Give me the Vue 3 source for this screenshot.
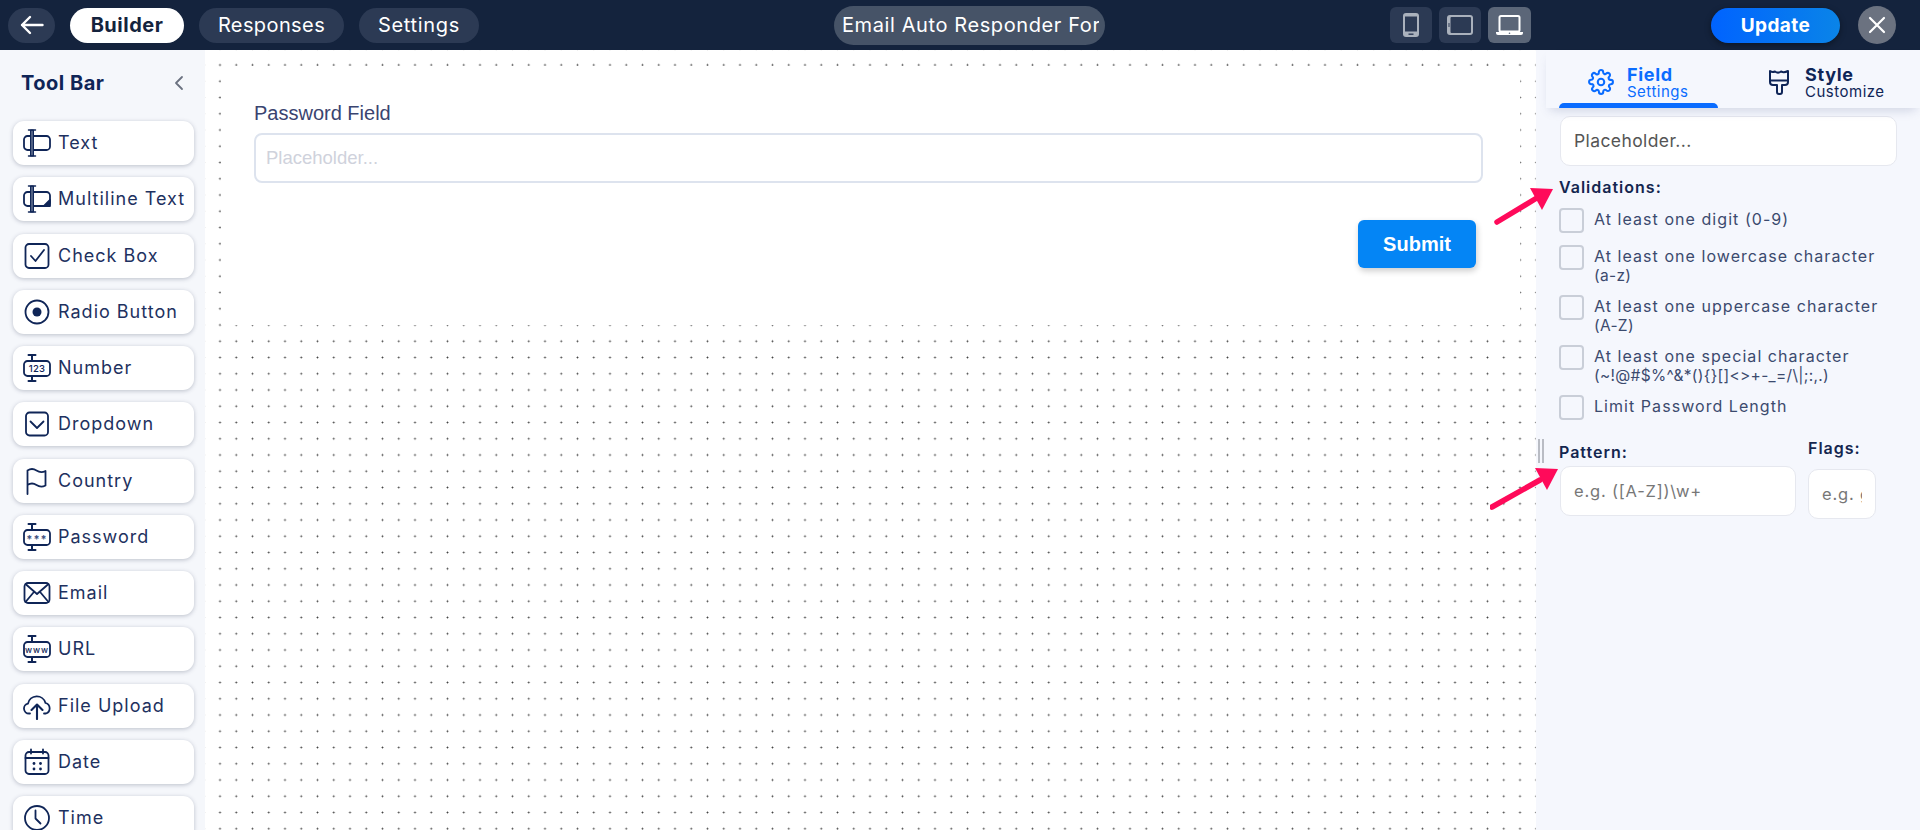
<template>
  <div class="page">
    <header class="top-bar">
      <button class="pill back-btn" aria-label="Back">
        <svg width="24" height="20" viewBox="0 0 24 20" fill="none" stroke="#fff" stroke-width="2.4" stroke-linecap="round" stroke-linejoin="round"><path d="M22.5 10H2M10 2 2 10l8 8"/></svg>
      </button>
      <button class="pill tab-btn active">Builder</button>
      <button class="pill tab-btn">Responses</button>
      <button class="pill tab-btn settings-btn">Settings</button>
      <div class="form-title"><span>Email Auto Responder Form</span></div>
      <div class="devices">
        <button class="device">
          <svg width="16" height="24" viewBox="0 0 16 24" fill="none"><rect x="0" y="0" width="16" height="24" rx="3" fill="#aab1bc"/><rect x="2" y="3.500" width="12" height="15" fill="#2c3a54"/><rect x="5.500" y="20.500" width="5" height="1.400" fill="#2c3a54"/></svg>
        </button>
        <button class="device">
          <svg width="26" height="20" viewBox="0 0 26 20" fill="none"><rect x="0" y="0" width="26" height="20" rx="3" fill="#aab1bc"/><rect x="3.500" y="2" width="20.500" height="16" rx="1" fill="#2c3a54"/><rect x="1.500" y="8" width="1" height="4" fill="#2c3a54"/></svg>
        </button>
        <button class="device on">
          <svg width="27" height="20" viewBox="0 0 27 20" fill="none"><rect x="3.500" y="1" width="20" height="15.500" rx="1.500" stroke="#fff" stroke-width="2"/><path d="M0 17h27v1a2 2 0 0 1-2 2H2a2 2 0 0 1-2-2z" fill="#fff"/><circle cx="13.500" cy="18.300" r="0.800" fill="#5b6678"/></svg>
        </button>
      </div>
      <button class="update-btn">Update</button>
      <button class="close-btn" aria-label="Close">
        <svg width="18" height="18" viewBox="0 0 18 18" stroke="#fff" stroke-width="2.200" stroke-linecap="round"><path d="M2 2l14 14M16 2 2 16"/></svg>
      </button>
    </header>

    <div class="workspace">
      <aside class="tool-bar">
        <div class="tool-head">
          <span>Tool Bar</span>
          <svg width="12" height="16" viewBox="0 0 12 16" fill="none" stroke="#6b7280" stroke-width="1.800" stroke-linecap="round" stroke-linejoin="round"><path d="M9 2 3 8l6 6"/></svg>
        </div>
        <ul class="tools">
          <li v-for="tool in tools" :key="tool.name" class="tool">
            <svg class="tool-icon" width="28" height="28" viewBox="0 0 28 28" fill="none" stroke="#0f2557" stroke-width="1.800" stroke-linecap="round" stroke-linejoin="round" v-html="tool.icon"></svg>
            <span class="tool-name">{{ tool.name }}</span>
          </li>
        </ul>
      </aside>

      <main class="canvas">
        <section class="form-card">
          <label class="form-label">Password Field</label>
          <div class="form-input">Placeholder...</div>
          <div class="submit-row"><button class="submit">Submit</button></div>
        </section>
      </main>

      <aside class="settings">
        <div class="panel-tabs">
          <div class="panel-tab active">
            <svg width="26" height="26" viewBox="0 0 24 24" fill="none" stroke="#0a6cff" stroke-width="1.900" stroke-linecap="round" stroke-linejoin="round"><circle cx="12" cy="12" r="3"/><path d="M19.4 15a1.65 1.65 0 0 0 .33 1.82l.06.06a2 2 0 1 1-2.83 2.83l-.06-.06a1.65 1.65 0 0 0-2.82 1.17V21a2 2 0 1 1-4 0v-.09a1.65 1.65 0 0 0-2.82-1.12l-.06.06a2 2 0 1 1-2.83-2.83l.06-.06A1.65 1.65 0 0 0 3.09 14H3a2 2 0 1 1 0-4h.09a1.65 1.65 0 0 0 1.12-2.82l-.06-.06a2 2 0 1 1 2.83-2.83l.06.06A1.65 1.65 0 0 0 10 3.09V3a2 2 0 1 1 4 0v.09a1.65 1.65 0 0 0 2.82 1.12l.06-.06a2 2 0 1 1 2.83 2.83l-.06.06A1.65 1.65 0 0 0 20.91 10H21a2 2 0 1 1 0 4h-.09a1.65 1.65 0 0 0-1.51 1z"/></svg>
            <div class="tab-text"><b>Field</b><small>Settings</small></div>
          </div>
          <div class="panel-tab">
            <svg width="22" height="28" viewBox="0 0 22 28" fill="none" stroke="#0f2557" stroke-width="2" stroke-linecap="round" stroke-linejoin="round"><path d="M2 2c2 1.500 3 1.500 5 .5 2 1.500 4 1.500 6 0 2 1 4 1 7-.5v11c0 2-1 3-3 3h-3v7a2 2 0 0 1-2 2h-1a2 2 0 0 1-2-2v-7H5c-2 0-3-1-3-3zM2 11.500h18"/></svg>
            <div class="tab-text"><b>Style</b><small>Customize</small></div>
          </div>
        </div>

        <div class="panel-body">
          <div class="text-input">Placeholder...</div>
          <h4 class="validations-title">Validations:</h4>
          <div v-for="rule in rules" :key="rule.text" class="rule">
            <span class="check"></span>
            <span class="rule-text">{{ rule.text }}<span v-if="rule.sub" class="rule-sub">{{ rule.sub }}</span></span>
          </div>
          <div class="regex-row">
            <div class="pattern">
              <h4>Pattern:</h4>
              <div class="text-input small">e.g. ([A-Z])\w+</div>
            </div>
            <div class="flags">
              <h4>Flags:</h4>
              <div class="text-input small flags-input"><span>e.g. gi</span></div>
            </div>
          </div>
        </div>
        <div class="grip"></div>
      </aside>
    </div>

    <svg class="arrows" width="90" height="340" viewBox="0 0 90 340" fill="none">
      <path d="M7 44 50 18" stroke="#ff0a5a" stroke-width="5.500" stroke-linecap="round"/>
      <path d="M63 11 40 10 52 32z" fill="#ff0a5a"/>
      <path d="M2 329 50 302" stroke="#ff0a5a" stroke-width="5.500" stroke-linecap="round"/>
      <path d="M68 291 45 290 57 312z" fill="#ff0a5a"/>
    </svg>
  </div>
</template>

<script setup>
const beam = '<path d="M5.500 1h7M5.500 27h7M7.800 1.500v25M10.200 1.500v25" stroke-width="1.500"/>'
const field = (inner) =>
  `<rect x="1" y="7" width="26" height="15" rx="3.500"/>${inner}<path d="M5.500 1h7M5.500 27h7M9 1.500V7M9 22v5" stroke-width="2"/>`

const tools = [
  { name: 'Text', icon: `<rect x="1" y="7" width="26" height="14" rx="3.500"/><rect x="7.800" y="1" width="2.400" height="26" fill="#fff" stroke-width="1.200"/>${beam}` },
  { name: 'Multiline Text', icon: `<rect x="1" y="7" width="26" height="14" rx="3.500"/><path d="M27 15v6h-6z" fill="#0f2557"/><rect x="7.800" y="1" width="2.400" height="26" fill="#fff" stroke-width="1.200"/>${beam}` },
  { name: 'Check Box', icon: '<rect x="2.500" y="2" width="23" height="24" rx="3.500"/><path d="M8 14l4.500 5L21 8"/>' },
  { name: 'Radio Button', icon: '<circle cx="14" cy="14" r="11.500"/><circle cx="14" cy="14" r="4.500" fill="#0f2557" stroke="none"/>' },
  { name: 'Number', icon: field('<text x="14" y="18" text-anchor="middle" font-family="Inter, sans-serif" font-size="9.500" font-weight="500" letter-spacing="0.300" fill="#0f2557" stroke="none">123</text>') },
  { name: 'Dropdown', icon: '<rect x="3" y="2.500" width="22" height="23" rx="3.500"/><path d="M7.500 11.500 14 18l6.500-6.500"/>' },
  { name: 'Country', icon: '<path d="M4.500 27V3.500c3-2 6-2 9 0s6 2 9 .5v14.500c-3 1.500-6 1.500-9 -.5s-6-2-9 0"/>' },
  { name: 'Password', icon: field('<text x="14" y="20" text-anchor="middle" font-family="Inter, sans-serif" font-size="11" font-weight="700" fill="#3d5080" stroke="none">***</text>') },
  { name: 'Email', icon: '<rect x="1.500" y="4" width="25" height="20" rx="3.500"/><path d="M2.500 5 14 15 25.500 5M2.500 23l8-9.500M25.500 23l-8-9.500"/>' },
  { name: 'URL', icon: field('<text x="14" y="17.500" text-anchor="middle" font-family="Inter, sans-serif" font-size="8.500" font-weight="500" fill="#0f2557" stroke="none">www</text>') },
  { name: 'File Upload', icon: '<path d="M7 21.500H6A5 5 0 0 1 5 11.600 9 9 0 0 1 22.500 11a5.500 5.500 0 0 1 .5 10.500h-2"/><path d="M14 27V13M8.500 18 14 12.500l5.500 5.500" stroke-width="2.100"/>' },
  { name: 'Date', icon: '<rect x="2.500" y="4" width="23" height="22" rx="3.500"/><path d="M2.500 10h23M8 1.500v4M20 1.500v4"/><g fill="#0f2557" stroke="none"><circle cx="11" cy="15.500" r="1.400"/><circle cx="17.500" cy="15.500" r="1.400"/><circle cx="11" cy="21" r="1.400"/><circle cx="17.500" cy="21" r="1.400"/></g>' },
  { name: 'Time', icon: '<circle cx="14" cy="14" r="12"/><path d="M12.500 6.500v8l5 5"/>' }
]

const rules = [
  { text: 'At least one digit (0-9)' },
  { text: 'At least one lowercase character', sub: '(a-z)' },
  { text: 'At least one uppercase character', sub: '(A-Z)' },
  { text: 'At least one special character', sub: '(~!@#$%^&*(){}[]<>+-_=/\\|;:,.)' },
  { text: 'Limit Password Length' }
]
</script>

<style>
html, body { margin: 0; height: 830px; overflow: hidden; background: #fff; }
</style>

<style scoped>
.page {
  position: relative;
  width: 1920px;
  height: 830px;
  overflow: hidden;
  font-family: Inter, "Noto Sans", sans-serif;
  color: #0f2557;
}
button { font-family: inherit; border: none; cursor: pointer; padding: 0; }

.top-bar {
  height: 50px;
  background: #14233d;
  display: flex;
  align-items: center;
  padding-left: 8px;
  box-sizing: border-box;
}
.pill {
  height: 35px;
  border-radius: 18px;
  background: #2c3a54;
  color: #fff;
  font-size: 20px;
  display: flex;
  align-items: center;
  justify-content: center;
}
.back-btn { width: 47px; margin-right: 15px; }
.tab-btn { width: 145px; margin-right: 15px; font-size: 20px; letter-spacing: 0.4px; }
.tab-btn.active { width: 114px; background: #fff; color: #14233d; font-weight: 700; letter-spacing: 0.5px; }
.settings-btn { width: 120px; letter-spacing: 0.7px; }
.form-title {
  margin-left: 340px;
  width: 271px;
  height: 39px;
  border-radius: 20px;
  background: #465367;
  color: #fff;
  font-size: 20px;
  line-height: 39px;
  padding-left: 8px;
  box-sizing: border-box;
  overflow: hidden;
  white-space: nowrap;
}
.form-title span { display: block; width: 257px; overflow: hidden; letter-spacing: 0.6px; }
.devices { margin-left: 285px; display: flex; gap: 7px; }
.device {
  width: 42px;
  height: 36px;
  border-radius: 6px;
  background: #2c3a54;
  display: flex;
  align-items: center;
  justify-content: center;
}
.device.on { background: #5b6678; width: 43px; }
.update-btn {
  margin-left: 180px;
  width: 129px;
  height: 35px;
  border-radius: 18px;
  background: linear-gradient(90deg, #0063ff, #0a84e8);
  color: #fff;
  font-size: 19px;
  font-weight: 700;
  letter-spacing: 0.4px;
  box-shadow: 0 2px 6px rgba(0, 0, 0, 0.4);
}
.close-btn {
  margin-left: 18px;
  width: 38px;
  height: 38px;
  border-radius: 50%;
  background: #6b7280;
  display: flex;
  align-items: center;
  justify-content: center;
}

.workspace {
  display: grid;
  grid-template-columns: 205px 1331px 384px;
  height: 780px;
}

.tool-bar { background: #f5f7fb; overflow: hidden; }
.tool-head {
  display: flex;
  align-items: center;
  justify-content: space-between;
  padding: 23px 20px 0 21px;
  height: 20px;
  font-size: 20px;
  font-weight: 700;
  letter-spacing: 0.5px;
  color: #0f2557;
}
.tools {
  list-style: none;
  margin: 28px 0 0;
  padding: 0 11px 0 13px;
  display: flex;
  flex-direction: column;
  gap: 12.25px;
}
.tool {
  height: 44px;
  flex: none;
  display: flex;
  align-items: center;
  gap: 7px;
  padding-left: 10px;
  background: #fff;
  border-radius: 11px;
  box-shadow: 0 1px 4px rgba(40, 50, 80, 0.28);
  font-size: 18px;
  letter-spacing: 1px;
  color: #1e3160;
  white-space: nowrap;
}
.tool-icon { flex: none; }
.tool-name { margin-top: -1px; }

.canvas {
  background-color: #fff;
  background-image: radial-gradient(circle, #444 0.9px, transparent 1px);
  background-size: 16.25px 16.25px;
  background-position: 6.875px 6.875px;
  padding: 16px 0 0 16px;
  box-sizing: border-box;
}
.form-card {
  width: 1299px;
  height: 259px;
  background: #fff;
  padding: 37px 0 0 33px;
  box-sizing: border-box;
}
.form-label {
  display: block;
  font: 20px/21px "Liberation Sans", Arial, sans-serif;
  color: #3a4470;
}
.form-input {
  margin-top: 9px;
  width: 1229px;
  height: 50px;
  box-sizing: border-box;
  border: 2px solid #dde3ee;
  border-radius: 8px;
  padding-left: 10px;
  font: 18.5px/46px "Liberation Sans", Arial, sans-serif;
  color: #cfd2dc;
}
.submit-row { width: 1222px; display: flex; justify-content: flex-end; margin-top: 37px; }
.submit {
  width: 118px;
  height: 48px;
  border-radius: 6px;
  background: #0485f5;
  color: #fff;
  font: 700 20px "Liberation Sans", Arial, sans-serif;
  box-shadow: 1px 3px 6px rgba(0, 0, 0, 0.2);
}

.settings { background: #f5f7fd; position: relative; }
.panel-tabs {
  margin-left: 10px;
  height: 58px;
  display: flex;
  padding-left: 13px;
  box-shadow: 0 6px 10px -4px rgba(70, 80, 130, 0.22);
  position: relative;
}
.panel-tab {
  width: 159px;
  height: 58px;
  box-sizing: border-box;
  padding: 19px 0 0 29px;
  display: flex;
  gap: 13px;
  position: relative;
  color: #0f2557;
}
.panel-tab + .panel-tab { margin-left: 32px; padding-left: 18px; gap: 15px; }
.panel-tab.active { color: #0a6cff; }
.panel-tab.active::after {
  content: "";
  position: absolute;
  left: 0;
  right: 0;
  bottom: 0;
  height: 5px;
  border-radius: 6px 6px 0 0;
  background: #0a6cff;
}
.tab-text { display: flex; flex-direction: column; margin-top: -4px; }
.tab-text b { font-size: 18px; line-height: 19px; font-weight: 700; letter-spacing: 0.7px; }
.tab-text small { font-size: 15px; line-height: 15px; letter-spacing: 0.5px; }

.panel-body { padding: 8px 23px 0 24px; }
.text-input {
  width: 337px;
  height: 50px;
  box-sizing: border-box;
  background: #fff;
  border: 1px solid #e6e8ef;
  border-radius: 10px;
  padding-left: 13px;
  font-size: 17.5px;
  line-height: 48px;
  color: #555;
  letter-spacing: 0.4px;
}
.validations-title {
  margin: 11px 0 11px -1px;
  font-size: 16px;
  line-height: 20px;
  font-weight: 600;
  letter-spacing: 1px;
  color: #14264f;
}
.rule {
  display: flex;
  gap: 10px;
  margin: 0 0 10px -1px;
  min-height: 27px;
  font-size: 16px;
  line-height: 19px;
  color: #3b4a6e;
  width: 340px;
  letter-spacing: 1.05px;
}
.check {
  flex: none;
  width: 25px;
  height: 25px;
  box-sizing: border-box;
  border: 2px solid #c9ced8;
  border-radius: 4px;
}
.rule-text { padding-top: 2px; }
.rule-sub { display: block; font-size: 15.5px; letter-spacing: 0.3px; }
.regex-row { display: flex; gap: 12px; margin-top: 20px; align-items: flex-start; }
.regex-row h4 {
  margin: 0;
  font-size: 16px;
  line-height: 20px;
  font-weight: 600;
  letter-spacing: 1px;
  color: #14264f;
}
.pattern h4 { margin: 0 0 4px -1px; }
.flags { margin-top: -4px; }
.flags h4 { margin-bottom: 11px; }
.text-input.small {
  width: 236px;
  font-size: 16.5px;
  color: #777;
  padding-left: 13px;
  letter-spacing: 0.8px;
}
.text-input.small.flags-input { width: 68px; height: 50px; padding-left: 13px; padding-right: 13px; overflow: hidden; }
.flags-input span { display: block; width: 40px; overflow: hidden; white-space: nowrap; }
.grip {
  position: absolute;
  left: 2px;
  top: 389px;
  width: 2px;
  height: 24px;
  border-left: 2px solid #b9bcc4;
  border-right: 2px solid #b9bcc4;
}

.arrows { position: absolute; left: 1490px; top: 178px; pointer-events: none; }
</style>
